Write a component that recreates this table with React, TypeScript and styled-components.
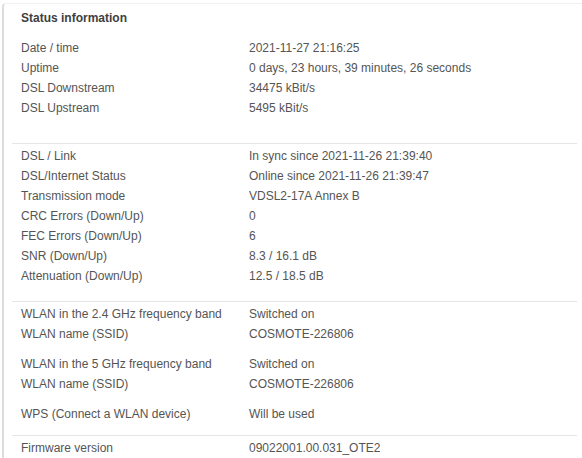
import styled, { createGlobalStyle } from "styled-components";

interface Row {
  label: string;
  value: string;
}

const GlobalStyle = createGlobalStyle`
  html, body {
    margin: 0;
    padding: 0;
    background: #ffffff;
  }
  body {
    font-family: "Liberation Sans", Arial, sans-serif;
    font-size: 12px;
    color: #555555;
  }
`;

const Card = styled.div`
  margin: 3px 0 0 2px;
  border-left: 2px solid #dcdcdc;
  border-top: 1px solid #f1f1f1;
  border-top-left-radius: 4px;
  min-height: 454px;
  display: flex;
  flex-direction: column;
`;

const Title = styled.h2`
  margin: 4px 0 0 0;
  padding-left: 17px;
  font-size: 12px;
  line-height: 20px;
  font-weight: bold;
  color: #404040;
`;

const Section = styled.div<{ $top: number; $bottom: number; $last?: boolean }>`
  margin: 0 5px 0 8px;
  padding: ${(p) => p.$top}px 0 ${(p) => p.$bottom}px 9px;
  border-bottom: ${(p) => (p.$last ? "none" : "1px solid #e6e6e6")};
  display: flex;
  flex-direction: column;
  gap: 10px;
`;

const Group = styled.div`
  display: flex;
  flex-direction: column;
`;

const Line = styled.div`
  display: grid;
  grid-template-columns: 228px auto;
  line-height: 20px;
  height: 20px;
  white-space: nowrap;
`;

const Label = styled.span`
  color: #555555;
`;

const Value = styled.span`
  color: #555555;
`;

const sections: { top: number; bottom: number; groups: Row[][] }[] = [
  {
    top: 10,
    bottom: 25,
    groups: [
      [
        { label: "Date / time", value: "2021-11-27 21:16:25" },
        { label: "Uptime", value: "0 days, 23 hours, 39 minutes, 26 seconds" },
        { label: "DSL Downstream", value: "34475 kBit/s" },
        { label: "DSL Upstream", value: "5495 kBit/s" },
      ],
    ],
  },
  {
    top: 2,
    bottom: 15,
    groups: [
      [
        { label: "DSL / Link", value: "In sync since 2021-11-26 21:39:40" },
        { label: "DSL/Internet Status", value: "Online since 2021-11-26 21:39:47" },
        { label: "Transmission mode", value: "VDSL2-17A Annex B" },
        { label: "CRC Errors (Down/Up)", value: "0" },
        { label: "FEC Errors (Down/Up)", value: "6" },
        { label: "SNR (Down/Up)", value: "8.3 / 16.1 dB" },
        { label: "Attenuation (Down/Up)", value: "12.5 / 18.5 dB" },
      ],
    ],
  },
  {
    top: 2,
    bottom: 11,
    groups: [
      [
        { label: "WLAN in the 2.4 GHz frequency band", value: "Switched on" },
        { label: "WLAN name (SSID)", value: "COSMOTE-226806" },
      ],
      [
        { label: "WLAN in the 5 GHz frequency band", value: "Switched on" },
        { label: "WLAN name (SSID)", value: "COSMOTE-226806" },
      ],
      [{ label: "WPS (Connect a WLAN device)", value: "Will be used" }],
    ],
  },
  {
    top: 2,
    bottom: 0,
    groups: [[{ label: "Firmware version", value: "09022001.00.031_OTE2" }]],
  },
];

const App = () => {
  return (
    <>
      <GlobalStyle />
      <Card>
        <Title>Status information</Title>
        {sections.map((section, i) => (
          <Section
            key={i}
            $top={section.top}
            $bottom={section.bottom}
            $last={i === sections.length - 1}
          >
            {section.groups.map((group, j) => (
              <Group key={j}>
                {group.map((row, k) => (
                  <Line key={k}>
                    <Label>{row.label}</Label>
                    <Value>{row.value}</Value>
                  </Line>
                ))}
              </Group>
            ))}
          </Section>
        ))}
      </Card>
    </>
  );
};

export default App;
